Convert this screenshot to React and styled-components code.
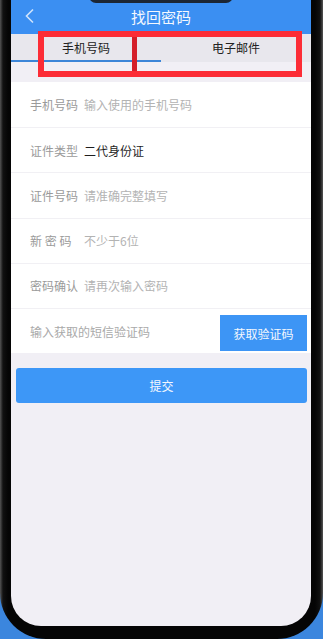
import React from "react";
import styled, { createGlobalStyle } from "styled-components";

const Global = createGlobalStyle`
  html, body { margin: 0; padding: 0; }
  body {
    width: 323px;
    height: 639px;
    overflow: hidden;
    background: #3b86de;
    font-family: "Noto Sans CJK SC", "Noto Sans", sans-serif;
    font-weight: 400;
  }
`;

const Frame = styled.div`
  position: relative;
  width: 323px;
  height: 639px;
  box-sizing: border-box;
  padding: 0 12px 13px 11px;
  background: linear-gradient(90deg, #555 0px, #111 3px, #050505 8px, #050505 315px, #111 320px, #555 323px);
  border-radius: 0 0 46px 46px;
  display: flex;
`;

const Screen = styled.div`
  flex: 1;
  background: #f1eff5;
  border-radius: 0 0 30px 30px;
  overflow: hidden;
  display: flex;
  flex-direction: column;
`;

const Notch = styled.div`
  position: absolute;
  top: -6px;
  left: 89px;
  width: 144px;
  height: 9px;
  background: #1c2633;
  border-radius: 0 0 7px 7px;
`;

const Header = styled.div`
  height: 34px;
  background: #3b8ff2;
  display: flex;
  align-items: center;
  justify-content: center;
  position: relative;
  color: #f4f8fe;
  font-size: 15px;
  padding-bottom: 1px;
  box-sizing: border-box;
`;

const Back = styled.svg`
  position: absolute;
  left: 13px;
  top: 8px;
`;

const Tabs = styled.div`
  height: 28px;
  background: #e8e7ed;
  display: flex;
`;

const Tab = styled.div`
  flex: 1;
  display: flex;
  align-items: center;
  justify-content: center;
  font-size: 12px;
  color: #222;
  box-sizing: border-box;
  border-bottom: 2px solid ${(p) => (p.$active ? "#3d86d8" : "transparent")};
  padding-top: 1px;
`;

const Form = styled.div`
  margin-top: 20px;
  background: #fff;
`;

const Row = styled.div`
  height: 45.2px;
  box-sizing: border-box;
  display: flex;
  align-items: center;
  padding: 0 4px 0 19px;
  border-top: ${(p) => (p.$first ? "none" : "1px solid #f1f0f4")};
  font-size: 12px;
`;

const Label = styled.span`
  width: 54px;
  color: #9a9a9a;
  white-space: pre;
`;

const Value = styled.span`
  color: ${(p) => (p.$filled ? "#1e1e1e" : "#b3b3b3")};
`;

const CodeHint = styled.span`
  flex: 1;
  color: #a9a9a9;
`;

const CodeButton = styled.div`
  width: 87px;
  height: 36px;
  background: #3d95f5;
  color: #f4f8fe;
  font-size: 12px;
  display: flex;
  align-items: center;
  justify-content: center;
  margin-top: 4px;
`;

const Submit = styled.div`
  margin: 15px 4px 0 5px;
  height: 35px;
  background: #3d97f7;
  border-radius: 3px;
  color: #f4f8fe;
  font-size: 12px;
  display: flex;
  align-items: center;
  justify-content: center;
`;

const Mark = styled.div`
  position: absolute;
  left: 38px;
  top: 31px;
  width: 264px;
  height: 46px;
  box-sizing: border-box;
  border: 6px solid #fc2c36;
`;

const MarkDivider = styled.div`
  position: absolute;
  left: 132px;
  top: 37px;
  width: 5px;
  height: 34px;
  background: #d41f2a;
`;

const rows = [
  ["手机号码", "输入使用的手机号码", false],
  ["证件类型", "二代身份证", true],
  ["证件号码", "请准确完整填写", false],
  ["新 密 码", "不少于6位", false],
  ["密码确认", "请再次输入密码", false],
];

export default function App() {
  return (
    <>
      <Global />
      <Frame>
        <Screen>
          <Header>
            <Back width="12" height="16" viewBox="0 0 12 16">
              <path d="M9 1.5 L2.5 8 L9 14.5" fill="none" stroke="#cfe3fb" strokeWidth="1.6" />
            </Back>
            找回密码
          </Header>
          <Tabs>
            <Tab $active>手机号码</Tab>
            <Tab>电子邮件</Tab>
          </Tabs>
          <Form>
            {rows.map(([l, v, f], i) => (
              <Row key={l} $first={i === 0}>
                <Label>{l}</Label>
                <Value $filled={f}>{v}</Value>
              </Row>
            ))}
            <Row>
              <CodeHint>输入获取的短信验证码</CodeHint>
              <CodeButton>获取验证码</CodeButton>
            </Row>
          </Form>
          <Submit>提交</Submit>
        </Screen>
        <Notch />
        <Mark />
        <MarkDivider />
      </Frame>
    </>
  );
}
